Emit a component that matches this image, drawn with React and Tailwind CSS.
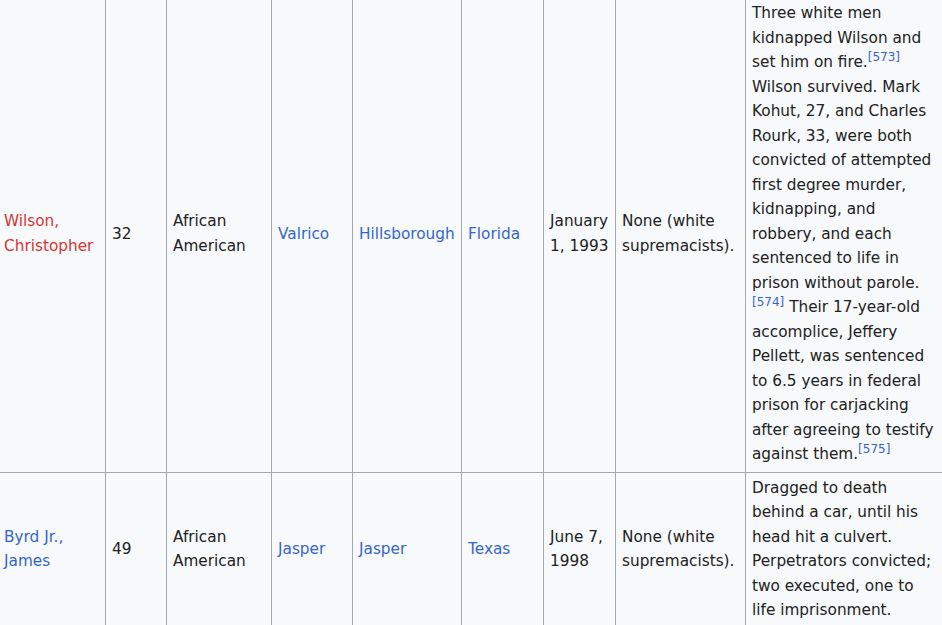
const rows = [
  {
    name: 'Wilson, Christopher',
    nameRed: true,
    age: '32',
    race: 'African American',
    city: 'Valrico',
    county: 'Hillsborough',
    state: 'Florida',
    date: 'January 1, 1993',
    org: 'None (white supremacists).',
    notes: (
      <>
        Three white men kidnapped Wilson and set him on fire.<Ref n="573" /> Wilson survived. Mark Kohut, 27, and
        Charles Rourk, 33, were both convicted of attempted first degree murder, kidnapping, and robbery, and each
        sentenced to life in prison without parole.<Ref n="574" /> Their 17-year-old accomplice, Jeffery Pellett, was
        sentenced to 6.5 years in federal prison for carjacking after agreeing to testify against them.
        <Ref n="575" />
      </>
    ),
  },
  {
    name: 'Byrd Jr., James',
    age: '49',
    race: 'African American',
    city: 'Jasper',
    county: 'Jasper',
    state: 'Texas',
    date: 'June 7, 1998',
    org: 'None (white supremacists).',
    notes: (
      <>
        Dragged to death behind a car, until his head hit a culvert. Perpetrators convicted; two executed, one to
        life imprisonment.
      </>
    ),
  },
];

function Ref({ n }) {
  return <sup className="text-[12px] leading-none text-[#3366cc] whitespace-nowrap">[{n}]</sup>;
}

const cell = 'border border-[#a2a9b1] px-[6px] pt-[3px] pb-[5px] align-middle';
const link = 'text-[#3366cc]';

export default function App() {
  return (
    <div
      className="min-h-screen bg-[#f8f9fa] overflow-hidden text-[#202122] text-[15.3px] leading-[24.5px]"
      style={{ fontFamily: '"DejaVu Sans", sans-serif' }}
    >
      <table className="table-fixed border-collapse ml-[-3px] mt-[-3px] w-[948px]">
        <colgroup>
          <col className="w-[108px]" />
          <col className="w-[61px]" />
          <col className="w-[105px]" />
          <col className="w-[81px]" />
          <col className="w-[109px]" />
          <col className="w-[82px]" />
          <col className="w-[72px]" />
          <col className="w-[130px]" />
          <col className="w-[200px]" />
        </colgroup>
        <tbody>
          {rows.map((r) => (
            <tr key={r.name}>
              <td className={cell}>
                <span className={r.nameRed ? 'text-[#d73333]' : link}>{r.name}</span>
              </td>
              <td className={cell}>{r.age}</td>
              <td className={cell}>{r.race}</td>
              <td className={cell}>
                <span className={link}>{r.city}</span>
              </td>
              <td className={cell}>
                <span className={link}>{r.county}</span>
              </td>
              <td className={cell}>
                <span className={link}>{r.state}</span>
              </td>
              <td className={cell}>{r.date}</td>
              <td className={cell}>{r.org}</td>
              <td className={cell}>{r.notes}</td>
            </tr>
          ))}
        </tbody>
      </table>
    </div>
  );
}
